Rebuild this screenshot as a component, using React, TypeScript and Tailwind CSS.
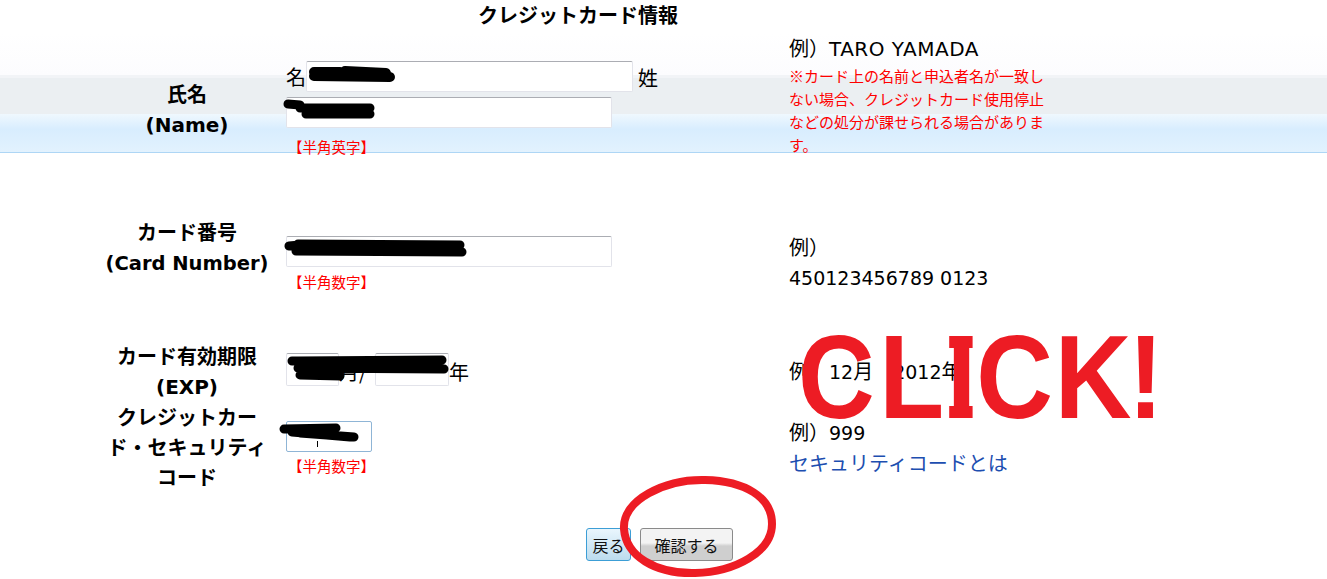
import React from "react";

const font = "font-['Noto_Sans_CJK_JP','Noto_Sans',sans-serif]";
const latin = "font-['DejaVu_Sans',sans-serif]";
const inputClass =
  "h-[31px] rounded-[2px] border border-[#e2e3ea] border-t-[#abadb3] bg-white outline-none block";

const Hint = ({ text, className }: { text: string; className: string }) => (
  <p className={`ml-[2px] text-[14.5px] leading-[16px] text-[#ff0000] ${className}`}>{text}</p>
);

const Num = ({ children }: { children: React.ReactNode }) => (
  <span className={`${latin} text-[19px]`}>{children}</span>
);

const Scribbles = () => (
  <svg className="absolute inset-0 pointer-events-none" width="1327" height="579" viewBox="0 0 1327 579" fill="none">
    <g stroke="#000" strokeLinecap="round" strokeLinejoin="round">
      <path d="M314 72 L340 72 M314 76 L390 77 M345 71 L386 73" strokeWidth="10" />
      <path d="M288 104 L300 105 M300 108 L370 108 M306 114 L370 114" strokeWidth="9" />
      <path d="M289 246 L300 245 M298 244 L460 245 M296 251 L462 252" strokeWidth="9" />
      <path d="M292 361 L300 361 M298 361 L442 360 M298 368 L444 369 M300 375 L340 376" strokeWidth="9" />
      <path d="M284 429 L336 428 M300 433 L354 437 M292 432 L350 437" strokeWidth="9" />
    </g>
    <path
      d="M624 529 C622 500 665 479 705 480 C745 481 772 497 772 524 C772 552 735 572 695 573 C655 574 626 556 624 529 Z"
      stroke="#ed1c24"
      strokeWidth="8"
    />
  </svg>
);

const App = () => {
  return (
    <div className={`relative w-[1327px] h-[579px] overflow-hidden bg-white text-[20px] leading-[30px] text-black ${font}`}>
      <h1 className="h-[33px] text-center font-bold text-[20px] leading-[30px] pr-[171px]">クレジットカード情報</h1>

      {/* name row, the band sits behind it */}
      <section className="relative h-[124px] pl-[97px] grid grid-cols-[189px_503px_256px]">
        <div className="absolute inset-x-0 top-0 h-[42px] bg-gradient-to-b from-white to-[#fcfcfe]" />
        <div className="absolute inset-x-0 top-[42px] h-[78px] flex flex-col">
          <div className="h-[3px] bg-[#f2f4f7]" />
          <div className="h-[36px] bg-[#ebeff2]" />
          <div className="flex-1 bg-gradient-to-b from-[#eff8fe] via-[#d8edfe] via-40% to-[#e2f2fe] border-b border-[#aed6f5]" />
        </div>
        <div className="relative pt-[46px] pr-[9px] text-center font-bold">
          氏名
          <br />
          <span className={latin}>(Name)</span>
        </div>
        <div className="relative pt-[28px]">
          <div className="flex items-center h-[31px]">
            <span>名</span>
            <input className={`${inputClass} w-[327px]`} />
            <span className="ml-[5px] mt-[2px]">姓</span>
          </div>
          <input className={`${inputClass} w-[326px] mt-[5px]`} />
          <Hint text="【半角英字】" className="mt-[11px]" />
        </div>
        <div className="relative">
          <p>
            例）<span className={`${latin} tracking-[0.5px]`}>TARO YAMADA</span>
          </p>
          <p className="text-[15px] leading-[23px] text-[#ff0000]">
            ※カード上の名前と申込者名が一致しない場合、クレジットカード使用停止などの処分が課せられる場合があります。
          </p>
        </div>
      </section>

      <section className="h-[184px] pl-[97px] grid grid-cols-[189px_503px_256px]">
        <div className="pt-[60px] pr-[9px] text-center font-bold">
          カード番号
          <br />
          <span className={`${latin} text-[19.5px]`}>(Card Number)</span>
        </div>
        <div className="pt-[79px]">
          <input className={`${inputClass} w-[326px]`} />
          <Hint text="【半角数字】" className="mt-[7px]" />
        </div>
        <div className="pt-[75px]">
          <p>例）</p>
          <p>
            <Num>450123456789 0123</Num>
          </p>
        </div>
      </section>

      <section className="h-[61px] pl-[97px] grid grid-cols-[189px_503px_256px]">
        <div className="pr-[9px] text-center font-bold">
          カード有効期限
          <br />
          <span className={latin}>(EXP)</span>
        </div>
        <div className="pt-[12px] flex items-start">
          <input className={`${inputClass} w-[53px] !h-[33px]`} />
          <span className="w-[36px] mt-[4px]">月/</span>
          <input className={`${inputClass} w-[74px] !h-[33px]`} />
          <span className="mt-[4px]">年</span>
        </div>
        <div className="pt-[15px]">
          <p>
            例）<Num>12</Num>月　<Num>2012</Num>年
          </p>
        </div>
      </section>

      <section className="h-[90px] pl-[97px] grid grid-cols-[189px_503px_256px]">
        <div className="pr-[9px] text-center font-bold">
          クレジットカー
          <br />
          ド・セキュリティ
          <br />
          コード
        </div>
        <div className="pt-[19px]">
          <div className="relative w-[86px]">
            <input className="h-[31px] w-[86px] rounded-[2px] border border-[#8fb5d6] bg-white outline-none block" />
            <span className="absolute left-[31px] top-[20px] h-[6px] w-px bg-black" />
          </div>
          <Hint text="【半角数字】" className="mt-[6px]" />
        </div>
        <div className="pt-[15px]">
          <p>
            例）<Num>999</Num>
          </p>
          <a className="text-[#1d4eb0]">セキュリティコードとは</a>
        </div>
      </section>

      <div className="mt-[36px] flex justify-center gap-[9px] pr-[8px] text-[16px]">
        <button className="h-[33px] w-[45px] rounded-[3px] border border-[#3c9ed6] bg-gradient-to-b from-[#eaf6fd] to-[#bcdcee] text-[#111]">
          戻る
        </button>
        <button className="h-[33px] w-[93px] rounded-[3px] border border-[#8a8a8a] bg-gradient-to-b from-[#f3f3f3] from-45% to-[#cfcfcf] to-55% text-[#111]">
          確認する
        </button>
      </div>

      <Scribbles />

      <div className="absolute left-[798px] top-[318px] flex origin-left scale-x-[.9] font-['Liberation_Sans',sans-serif] font-bold text-[118px] leading-[118px] text-[#ed1c24] whitespace-nowrap">
        <span>C</span>
        <span className="ml-[5px]">L</span>
        <span className="relative ml-[3px] before:absolute before:left-[3px] before:top-[18px] before:h-[12px] before:w-[26px] before:bg-[#ed1c24] after:absolute after:left-[3px] after:top-[88px] after:h-[12px] after:w-[26px] after:bg-[#ed1c24]">
          I
        </span>
        <span>C</span>
        <span className="ml-[2px]">K</span>
        <span className="ml-[-4px]">!</span>
      </div>
    </div>
  );
};

export default App;
